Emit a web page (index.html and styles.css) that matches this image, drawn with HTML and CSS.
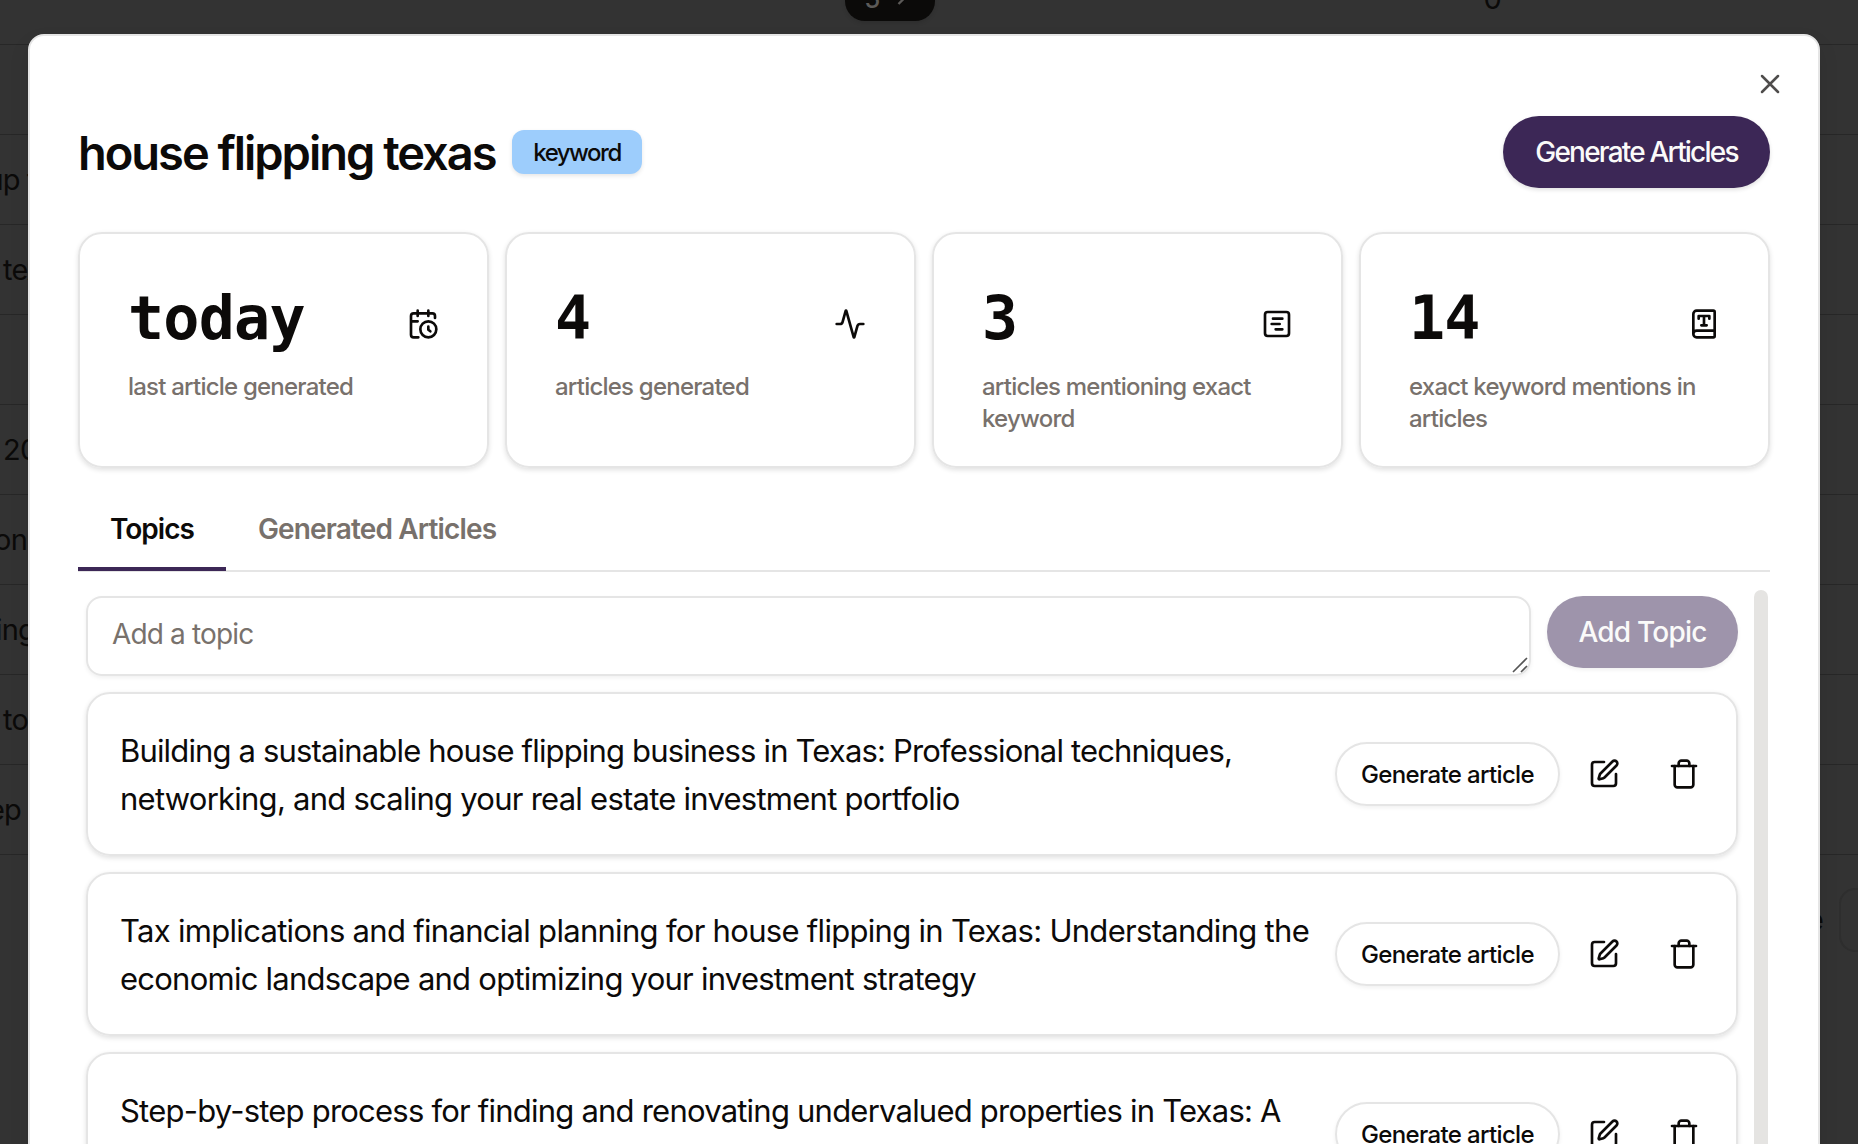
FILE: index.html
```html
<!DOCTYPE html>
<html lang="en">
<head>
<meta charset="utf-8">
<title>house flipping texas</title>
<link rel="stylesheet" href="styles.css">
</head>
<body>
<svg width="0" height="0" class="sprite">
  <symbol id="edit" viewBox="0 0 24 24"><path d="M12 3H5a2 2 0 0 0-2 2v14a2 2 0 0 0 2 2h14a2 2 0 0 0 2-2v-7"/><path d="M18.375 2.625a1 1 0 0 1 3 3l-9.013 9.014a2 2 0 0 1-.853.505l-2.873.84a.5.5 0 0 1-.62-.62l.84-2.873a2 2 0 0 1 .506-.852z"/></symbol>
  <symbol id="trash" viewBox="0 0 24 24"><path d="M3 6h18"/><path d="M19 6v14c0 1-1 2-2 2H7c-1 0-2-1-2-2V6"/><path d="M8 6V4c0-1 1-2 2-2h4c1 0 2 1 2 2v2"/></symbol>
</svg>
<div class="page">
  <div class="row first">
    <span class="pill">5<svg class="chevron" viewBox="0 0 24 24"><path d="m9 18 6-6-6-6"/></svg></span>
    <span class="count">0</span>
  </div>
  <div class="row"></div>
  <div class="row"><span class="cell end-up">up f</span></div>
  <div class="row"><span class="start">tex</span></div>
  <div class="row"></div>
  <div class="row"><span class="start">20</span></div>
  <div class="row"><span class="cell end-on">on</span></div>
  <div class="row"><span class="cell end-ing">ing</span></div>
  <div class="row"><span class="start">to</span></div>
  <div class="row"><span class="cell end-ep">ep</span></div>
  <div class="pager"><span>e</span><span class="page-btn"></span></div>
</div>
<div class="overlay">
  <main class="modal">
    <button class="close" aria-label="Close"><svg class="icon" viewBox="0 0 24 24"><path d="M18 6 6 18M6 6l12 12"/></svg></button>
    <header class="head">
      <h1 class="title">house flipping texas</h1>
      <span class="badge">keyword</span>
      <button class="primary">Generate Articles</button>
    </header>
    <section class="stats">
      <div class="stat">
        <div class="stat-top"><b class="num">today</b><svg class="icon" viewBox="0 0 24 24"><path d="M21 7.5V6a2 2 0 0 0-2-2H5a2 2 0 0 0-2 2v14a2 2 0 0 0 2 2h3.5M16 2v4M8 2v4M3 10h5M17.5 17.5 16 16.3V14"/><circle cx="16" cy="16" r="6"/></svg></div>
        <p class="label">last article generated</p>
      </div>
      <div class="stat">
        <div class="stat-top"><b class="num">4</b><svg class="icon" viewBox="0 0 24 24"><path d="M22 12h-2.48a2 2 0 0 0-1.93 1.46l-2.35 8.36a.25.25 0 0 1-.48 0L9.24 2.18a.25.25 0 0 0-.48 0l-2.35 8.36A2 2 0 0 1 4.49 12H2"/></svg></div>
        <p class="label">articles generated</p>
      </div>
      <div class="stat">
        <div class="stat-top"><b class="num">3</b><svg class="icon" viewBox="0 0 24 24"><rect x="3" y="3" width="18" height="18" rx="2"/><path d="M9 8h7M8 12h6M11 16h5"/></svg></div>
        <p class="label">articles mentioning exact<br>keyword</p>
      </div>
      <div class="stat">
        <div class="stat-top"><b class="num">14</b><svg class="icon" viewBox="0 0 24 24"><path d="M10 13h4M12 6v7M16 8V6H8v2"/><path d="M4 19.5v-15A2.5 2.5 0 0 1 6.5 2H19a1 1 0 0 1 1 1v18a1 1 0 0 1-1 1H6.5a1 1 0 0 1 0-5H20"/></svg></div>
        <p class="label">exact keyword mentions in<br>articles</p>
      </div>
    </section>
    <nav class="tabs">
      <a class="tab active">Topics</a>
      <a class="tab">Generated Articles</a>
    </nav>
    <div class="panel">
      <div class="list">
        <div class="add">
          <div class="field">Add a topic<svg class="grip" viewBox="0 0 16 16"><path d="M1 15 15 1M9 15l6-6"/></svg></div>
          <button class="primary disabled">Add Topic</button>
        </div>
        <article class="topic">
          <p class="text"><span class="snug">Building a sustainable house flipping business in Texas: Professional techniques,</span><br>networking, and scaling your real estate investment portfolio</p>
          <button class="outline">Generate article</button>
          <svg class="icon"><use href="#edit"/></svg><svg class="icon"><use href="#trash"/></svg>
        </article>
        <article class="topic">
          <p class="text"><span class="loose">Tax implications and financial planning for house flipping in Texas: Understanding the</span><br>economic landscape and optimizing your investment strategy</p>
          <button class="outline">Generate article</button>
          <svg class="icon"><use href="#edit"/></svg><svg class="icon"><use href="#trash"/></svg>
        </article>
        <article class="topic">
          <p class="text"><span class="snug-sm">Step-by-step process for finding and renovating undervalued properties in Texas: A</span><br>&nbsp;</p>
          <button class="outline">Generate article</button>
          <svg class="icon"><use href="#edit"/></svg><svg class="icon"><use href="#trash"/></svg>
        </article>
      </div>
      <div class="scrollbar"></div>
    </div>
  </main>
</div>
</body>
</html>
```
FILE: styles.css
```css
* { box-sizing: border-box; }
body { margin: 0; width: 1858px; height: 1144px; overflow: hidden; font-family: Inter, "Liberation Sans", sans-serif; color: #0c0a09; background: #fff; }
h1, p { margin: 0; font-weight: inherit; }
button { border: 0; padding: 0; background: none; font: inherit; color: inherit; letter-spacing: inherit; }
.sprite { display: block; position: absolute; }
.icon { display: block; flex: none; width: 32px; height: 32px; fill: none; stroke: currentColor; stroke-width: 2; stroke-linecap: round; stroke-linejoin: round; }

/* Dimmed table behind the dialog */
.page { position: absolute; inset: 0; background: #333; color: #0b0a09; font-size: 29px; letter-spacing: -0.8px; overflow: hidden; }
.row { height: 90px; border-bottom: 1px solid #272727; display: flex; align-items: center; white-space: nowrap; }
.row.first { height: 45px; padding: 0 357px 0 845px; align-items: flex-start; justify-content: space-between; }
.pill { display: flex; align-items: center; justify-content: center; gap: 8px; width: 90px; height: 44px; margin-top: -23px; border-radius: 20px; background: #0b0a09; color: #5c5a58; font-size: 26px; font-weight: 500; line-height: 40px; box-shadow: 0 2px 4px rgba(0,0,0,.12); }
.chevron { width: 28px; height: 28px; margin-top: -4px; fill: none; stroke: currentColor; stroke-width: 2; }
.count { margin-top: -19px; line-height: 36px; }
.start { padding-left: 3px; }
.cell { display: flex; justify-content: flex-end; }
.end-up { width: 37px; }
.end-on { width: 27px; }
.end-ing { width: 35px; }
.end-ep { width: 21px; }
.pager { display: flex; align-items: center; justify-content: flex-end; gap: 16px; height: 64px; margin: 33px -45px 0 0; font-size: 28px; font-weight: 500; }
.page-btn { width: 64px; height: 64px; border: 2px solid #2e2e2e; border-radius: 16px; }

/* Dialog */
.overlay { position: absolute; inset: 0; padding: 34px 38px 0 28px; overflow: hidden; }
.modal { position: relative; height: 1300px; padding: 80px 48px 0; background: #fff; border: 2px solid #e5e5e5; border-radius: 16px; box-shadow: 0 10px 20px rgba(0,0,0,.1); }
.close { position: absolute; right: 32px; top: 32px; color: #4f4d4c; }
.close .icon { stroke-width: 1.9; }
.head { display: flex; align-items: center; height: 72px; }
.title { width: 434px; padding-top: 2px; font-size: 47px; font-weight: 600; line-height: 60px; letter-spacing: -2.02px; white-space: nowrap; }
.badge { width: 130px; height: 44px; border-radius: 12px; background: #9dcdfc; box-shadow: 0 2px 4px rgba(0,0,0,.1); font-size: 24px; font-weight: 500; letter-spacing: -1.5px; display: flex; align-items: center; justify-content: center; }
.primary { display: flex; align-items: center; justify-content: center; height: 72px; border-radius: 36px; background: #3c2756; color: #fafaf9; font-size: 28px; font-weight: 500; box-shadow: 0 2px 4px rgba(0,0,0,.12); white-space: nowrap; }
.head .primary { width: 267px; margin-left: auto; letter-spacing: -1.8px; }
.stats { display: grid; grid-template-columns: repeat(4, 1fr); gap: 16px; margin-top: 44px; }
.stat { height: 236px; padding: 46px 48px; border: 2px solid #e5e5e5; border-radius: 24px; box-shadow: 0 2px 5px rgba(0,0,0,.12); }
.stat-top { display: flex; justify-content: space-between; align-items: center; height: 76px; }
.stat-top .icon { margin-top: 12px; }
.num { font: 700 60px/60px "DejaVu Sans Mono", monospace; letter-spacing: -0.75px; }
.label { margin-top: 15px; font-size: 24px; font-weight: 450; line-height: 32px; letter-spacing: -0.78px; color: #78716c; white-space: nowrap; }
.tabs { display: flex; margin-top: 24px; height: 80px; border-bottom: 2px solid #e5e5e5; }
.tab { height: 79px; padding: 0 32px; font-size: 28px; font-weight: 600; line-height: 75px; letter-spacing: -0.86px; color: #78716c; white-space: nowrap; }
.tab.active { color: #0c0a09; width: 148px; border-bottom: 4px solid #3c2756; letter-spacing: -1px; }
.panel { display: flex; justify-content: space-between; margin-top: 18px; padding: 0 2px 0 8px; }
.list { width: 1652px; padding-top: 6px; display: flex; flex-direction: column; gap: 16px; }
.scrollbar { width: 14px; border-radius: 7px; background: #e5e4e2; }
.add { display: flex; justify-content: space-between; }
.field { position: relative; width: 1445px; height: 80px; padding: 0 24px; border: 2px solid #e5e5e5; border-radius: 16px; color: #78716c; font-size: 28px; line-height: 73px; letter-spacing: -0.85px; box-shadow: 0 2px 4px rgba(0,0,0,.06); }
.grip { position: absolute; right: 1px; bottom: 1px; width: 16px; height: 16px; stroke: #555; stroke-width: 1.6; fill: none; }
.disabled { width: 191px; background: #9e94ab; letter-spacing: -0.8px; box-shadow: 0 2px 4px rgba(0,0,0,.06); }
.topic { display: flex; align-items: center; height: 164px; padding: 0 36px 0 32px; border: 2px solid #e5e5e5; border-radius: 24px; box-shadow: 0 2px 5px rgba(0,0,0,.12); }
.topic .icon { margin-left: 48px; }
.topic .outline + .icon { margin-left: 28px; }
.text { width: 1215px; padding-top: 1px; font-size: 31px; line-height: 48px; letter-spacing: -0.75px; white-space: nowrap; }
.snug { letter-spacing: -0.84px; }
.snug-sm { letter-spacing: -0.78px; }
.loose { letter-spacing: -0.7px; }
.outline { flex: none; width: 225px; height: 64px; padding-top: 1px; border: 2px solid #e5e5e5; border-radius: 32px; font-size: 24px; font-weight: 500; letter-spacing: -0.65px; box-shadow: 0 2px 4px rgba(0,0,0,.06); }
```
